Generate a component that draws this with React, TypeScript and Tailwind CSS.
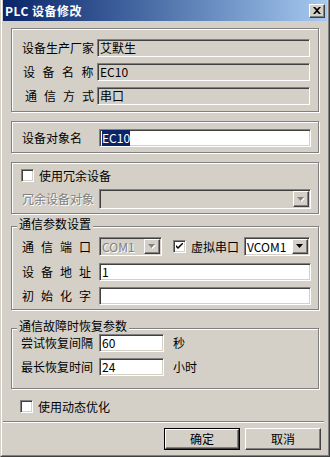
import React from "react";

const sunken =
  "border border-t-[#808080] border-l-[#808080] border-b-white border-r-white shadow-[inset_1px_1px_0_#404040,inset_-1px_-1px_0_#d4d0c8]";
const raised =
  "border border-t-white border-l-white border-b-[#404040] border-r-[#404040] shadow-[inset_-1px_-1px_0_#808080,inset_1px_1px_0_#d4d0c8]";
const disabledText = "text-[#808080] [text-shadow:1px_1px_0_#ffffff]";
const label = "shrink-0 whitespace-nowrap leading-[14px]";

const Group = ({
  title,
  className,
  children,
}: {
  title?: string;
  className: string;
  children: React.ReactNode;
}) => (
  <div
    className={`relative border border-[#808080] shadow-[inset_1px_1px_0_#ffffff,1px_1px_0_#ffffff] ${className}`}
  >
    {title && (
      <span className="absolute -top-[9px] left-[5px] bg-[#d4d0c8] px-[2px] leading-[12px] whitespace-nowrap">
        {title}
      </span>
    )}
    {children}
  </div>
);

const Field = ({
  w,
  gray,
  children,
}: {
  w: string;
  gray?: boolean;
  children?: React.ReactNode;
}) => (
  <div
    className={`${sunken} ${w} shrink-0 h-[18px] ${gray ? "bg-[#d4d0c8]" : "bg-white"} pl-[2px] leading-[16px] whitespace-nowrap overflow-hidden`}
  >
    {children}
  </div>
);

const Arrow = ({ disabled }: { disabled?: boolean }) => (
  <svg width="8" height="5" viewBox="0 0 8 5">
    {disabled && <polygon points="1,1 8,1 4.5,5" fill="#ffffff" />}
    <polygon points="0,0 7,0 3.5,4" fill={disabled ? "#808080" : "#000000"} />
  </svg>
);

const Combo = ({
  w,
  h,
  value,
  disabled,
}: {
  w: string;
  h: string;
  value?: string;
  disabled?: boolean;
}) => (
  <div
    className={`${sunken} ${w} ${h} shrink-0 flex p-[1px] ${disabled ? "bg-[#d4d0c8]" : "bg-white"}`}
  >
    <div
      className={`flex-1 pl-[1px] flex items-center whitespace-nowrap overflow-hidden ${disabled ? disabledText : ""}`}
    >
      {value}
    </div>
    <div className={`${raised} w-[16px] h-full bg-[#d4d0c8] flex items-center justify-center`}>
      <Arrow disabled={disabled} />
    </div>
  </div>
);

const Check = ({ checked }: { checked?: boolean }) => (
  <div className={`${sunken} w-[13px] h-[13px] bg-white flex items-center justify-center shrink-0`}>
    {checked && (
      <svg width="7" height="7" viewBox="0 0 7 7">
        <path d="M0 2 L0 4 L2 6 L7 1 L7 -1 L2 4 Z" fill="#000000" />
      </svg>
    )}
  </div>
);

export default function App() {
  return (
    <div className="w-[330px] h-[457px] bg-[#d4d0c8] border-l border-r border-b border-l-[#d4d0c8] border-r-[#404040] border-b-[#404040] font-['Noto_Sans_CJK_SC','Noto_Sans',sans-serif] text-[12px] text-black">
      <div className="h-full border-l border-r border-b border-l-white border-r-[#808080] border-b-[#808080] px-[1px] flex flex-col">
        {/* title bar */}
        <div className="h-[21px] shrink-0 flex items-center bg-gradient-to-r from-[#0a246a] to-[#a6caf0] pl-[2px] pr-[2px]">
          <span className="font-bold text-white leading-[12px] tracking-[0.5px]">PLC 设备修改</span>
          <div className={`${raised} ml-auto w-[16px] h-[14px] bg-[#d4d0c8] flex items-center justify-center`}>
            <svg width="8" height="7" viewBox="0 0 8 7">
              <path d="M0 0 L2 0 L4 2 L6 0 L8 0 L5 3.5 L8 7 L6 7 L4 5 L2 7 L0 7 L3 3.5 Z" fill="#000000" />
            </svg>
          </div>
        </div>

        <Group className="ml-[8px] mt-[7px] w-[308px] h-[84px] shrink-0">
          <div className="flex flex-col gap-[6px] pt-[10px] pl-[10px]">
            <div className="flex items-center">
              <span className={`${label} w-[75px]`}>设备生产厂家</span>
              <Field w="w-[213px]" gray>
                艾默生
              </Field>
            </div>
            <div className="flex items-center">
              <span className={`${label} w-[75px] pl-[1px] tracking-[7.5px]`}>设备名称</span>
              <Field w="w-[213px]" gray>
                EC10
              </Field>
            </div>
            <div className="flex items-center">
              <span className={`${label} w-[75px] pl-[3px] tracking-[7px]`}>通信方式</span>
              <Field w="w-[213px]" gray>
                串口
              </Field>
            </div>
          </div>
        </Group>

        <Group className="ml-[8px] mt-[9px] w-[308px] h-[32px] shrink-0">
          <div className="flex items-center pt-[7px] pl-[10px]">
            <span className={`${label} w-[77px]`}>设备对象名</span>
            <Field w="w-[212px]">
              <span className="bg-[#0a246a] text-white">EC10</span>
            </Field>
          </div>
        </Group>

        <Group className="ml-[8px] mt-[9px] w-[308px] h-[52px] shrink-0">
          <div className="flex flex-col pt-[6px] pl-[9px]">
            <div className="flex items-center h-[13px]">
              <Check />
              <span className="ml-[5px] leading-[13px]">使用冗余设备</span>
            </div>
            <div className="flex items-center mt-[7px]">
              <span className={`${label} w-[78px] pl-[1px] ${disabledText}`}>冗余设备对象</span>
              <Combo w="w-[212px]" h="h-[20px]" disabled />
            </div>
          </div>
        </Group>

        <Group title="通信参数设置" className="ml-[8px] mt-[12px] w-[308px] h-[84px] shrink-0">
          <div className="flex flex-col pt-[10px] pl-[10px]">
            <div className="flex items-center">
              <span className={`${label} w-[77px] tracking-[7px]`}>通信端口</span>
              <Combo w="w-[63px]" h="h-[19px]" value="COM1" disabled />
              <div className="ml-[11px]">
                <Check checked />
              </div>
              <span className={`${label} ml-[5px]`}>虚拟串口</span>
              <div className="ml-[5px]">
                <Combo w="w-[66px]" h="h-[19px]" value="VCOM1" />
              </div>
            </div>
            <div className="flex items-center mt-[7px]">
              <span className={`${label} w-[77px] tracking-[7px]`}>设备地址</span>
              <Field w="w-[212px]">1</Field>
            </div>
            <div className="flex items-center mt-[6px]">
              <span className={`${label} w-[77px] tracking-[7px]`}>初始化字</span>
              <Field w="w-[212px]" />
            </div>
          </div>
        </Group>

        <Group title="通信故障时恢复参数" className="ml-[8px] mt-[18px] w-[308px] h-[61px] shrink-0">
          <div className="flex flex-col pt-[5px] pl-[9px]">
            <div className="flex items-center">
              <span className={`${label} w-[78px]`}>尝试恢复间隔</span>
              <Field w="w-[65px]">60</Field>
              <span className={`${label} ml-[9px]`}>秒</span>
            </div>
            <div className="flex items-center mt-[6px]">
              <span className={`${label} w-[78px]`}>最长恢复时间</span>
              <Field w="w-[65px]">24</Field>
              <span className={`${label} ml-[9px]`}>小时</span>
            </div>
          </div>
        </Group>

        <div className="flex items-center ml-[17px] mt-[11px] h-[13px] shrink-0">
          <Check />
          <span className="ml-[5px] leading-[13px]">使用动态优化</span>
        </div>

        <div className="mt-[8px] w-[321px] h-[2px] border-t border-t-[#808080] border-b border-b-white shrink-0" />

        <div className="flex justify-end gap-[5px] mt-[5px] pr-[6px] shrink-0">
          <div className="border border-black">
            <div className={`${raised} w-[74px] h-[20px] bg-[#d4d0c8] flex items-center justify-center leading-[12px]`}>
              确定
            </div>
          </div>
          <div className={`${raised} w-[76px] h-[22px] bg-[#d4d0c8] flex items-center justify-center leading-[12px]`}>
            取消
          </div>
        </div>
      </div>
    </div>
  );
}
